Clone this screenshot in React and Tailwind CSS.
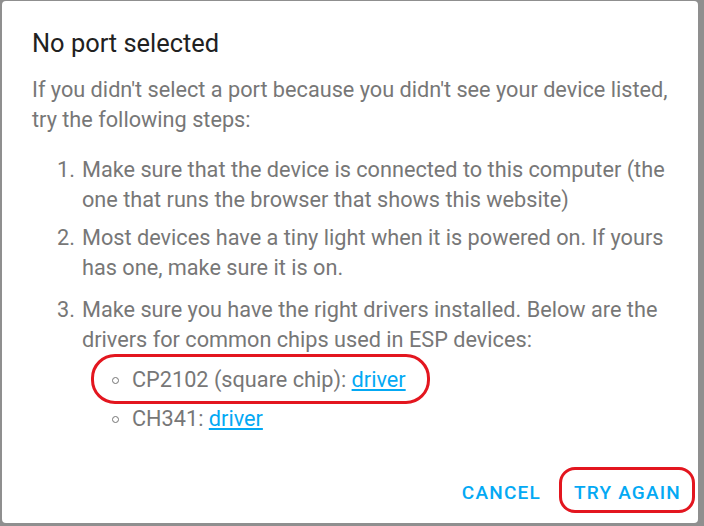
import React from 'react';

const steps = [
  'Make sure that the device is connected to this computer (the one that runs the browser that shows this website)',
  'Most devices have a tiny light when it is powered on. If yours has one, make sure it is on.',
  'Make sure you have the right drivers installed. Below are the drivers for common chips used in ESP devices:',
];

const stepGaps = ['', 'mt-[8px]', 'mt-[12px]'];

const Link = ({ children }) => (
  <a href="#" className="text-[#03a9f4] underline underline-offset-2">{children}</a>
);

const SubItem = ({ children, className = '' }) => (
  <li className={`flex items-center ${className}`}>
    <span className="ml-[30px] mr-[13px] w-[7px] h-[7px] rounded-full border border-[#757575]"></span>
    <span>{children}</span>
  </li>
);

export default function App() {
  return (
    <div
      className="relative w-[704px] h-[526px] bg-[#8f8f8f] pt-[1px] pl-[2px] pr-[6px] pb-[3px]"
      style={{ fontFamily: 'Roboto, "Liberation Sans", sans-serif' }}
    >
      <div className="h-full bg-white rounded-[4px] pt-[26px] pl-[30px] pr-[26px]">
        <h2 className="text-[25.4px] leading-[32px] text-[#212121]">No port selected</h2>

        <div className="mt-[16px] text-[21.7px] leading-[30px] text-[#777777]">
          <p>If you didn't select a port because you didn't see your device listed, try the following steps:</p>

          <ol className="mt-[20px]">
            {steps.map((text, i) => (
              <li key={i} className={`flex ${stepGaps[i]}`}>
                <span className="w-[25px] pl-[25px] box-content shrink-0">{i + 1}.</span>
                <div className="flex-1">
                  <span>{text}</span>
                  {i === 2 && (
                    <ul className="mt-[10px]">
                      <SubItem>CP2102 (square chip): <Link>driver</Link></SubItem>
                      <SubItem className="mt-[9px]">CH341: <Link>driver</Link></SubItem>
                    </ul>
                  )}
                </div>
              </li>
            ))}
          </ol>
        </div>

        <div className="mt-[44px] -mr-[17px] flex justify-end gap-[17px]">
          <button className="px-[8px] text-[19px] leading-[30px] font-medium tracking-[1.2px] text-[#03a9f4]">CANCEL</button>
          <button className="px-[8px] text-[19px] leading-[30px] font-medium tracking-[1.2px] text-[#03a9f4]">TRY AGAIN</button>
        </div>
      </div>

      <div className="absolute left-[91px] top-[354px] w-[339px] h-[50px] rounded-[24px] border-[3px] border-[#e3161f]"></div>
      <div className="absolute left-[559px] top-[467px] w-[136px] h-[46px] rounded-[16px] border-[3px] border-[#e3161f]"></div>
    </div>
  );
}
